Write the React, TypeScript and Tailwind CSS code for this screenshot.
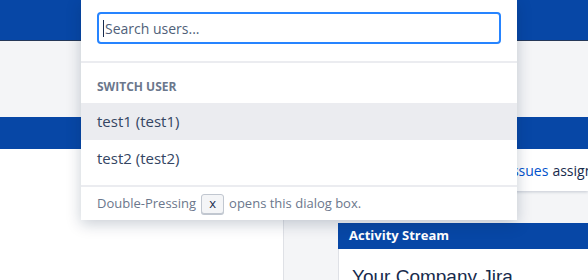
import { useState } from "react";

interface User {
  id: string;
  label: string;
}

const users: User[] = [
  { id: "test1", label: "test1 (test1)" },
  { id: "test2", label: "test2 (test2)" },
];

export default function App() {
  const [query, setQuery] = useState("");
  const [active, setActive] = useState("test1");

  const filtered = users.filter((u) =>
    u.label.toLowerCase().includes(query.toLowerCase())
  );

  return (
    <div
      className="relative h-[280px] w-[588px] overflow-hidden bg-white"
      style={{ fontFamily: '"Open Sans", "Noto Sans", sans-serif' }}
    >
      {/* page behind the dialog */}
      <div className="h-[41px] border-b border-[#253858] bg-[#0747a6]" />
      <div className="h-[76px] bg-[#f4f5f7]" />
      <div className="h-[32px] bg-[#0747a6]" />
      <div className="flex h-[131px]">
        <div className="w-[284px] shrink-0 border-r border-[#dfe1e6] bg-white" />
        <div className="min-w-0 flex-1 overflow-hidden bg-[#f4f5f7] pl-[54px]">
          <div className="flex h-[42px] items-center whitespace-nowrap bg-white pl-[12px] text-[14px] text-[#172b4d] shadow-[0_1px_3px_rgba(9,30,66,0.2)]">
            <span className="w-[158px] shrink-0" />
            <span className="text-[#0052cc]">Issues</span>
            <span className="ml-[4px]">assigned to me</span>
          </div>
          <div className="mt-[32px] flex h-[26px] items-center bg-[#0747a6] px-[11px] text-[13px] font-bold text-white">
            Activity Stream
          </div>
          <div className="h-[40px] border-l border-[#dfe1e6] bg-white pl-[13px] pt-[17px]">
            <div
              className="whitespace-nowrap text-[19px] leading-[1.15] text-[#172b4d]"
              style={{ fontFamily: '"Liberation Sans", Arial, sans-serif' }}
            >
              Your Company Jira
            </div>
          </div>
        </div>
      </div>

      {/* switch user dialog */}
      <div className="absolute left-[81px] top-0 w-[436px] bg-white shadow-[0_4px_14px_rgba(9,30,66,0.22)]">
        <div className="border-b-2 border-[#ebecf0] px-[16px] pb-[17px] pt-[12px]">
          <div className="relative">
            <input
              autoFocus
              value={query}
              onChange={(e) => setQuery(e.target.value)}
              placeholder="Search users..."
              className="block h-[32px] w-full rounded-[4px] border-2 border-[#2684ff] px-[6px] text-[14px] text-[#172b4d] caret-[#172b4d] outline-none placeholder:text-[#505f79]"
            />
            {query === "" && (
              <span className="pointer-events-none absolute left-[6px] top-[8px] h-[17px] w-px bg-[#172b4d]" />
            )}
          </div>
        </div>
        <div className="pb-[9px]">
          <div className="px-[16px] pb-[8px] pt-[16px] text-[12px] font-bold leading-[16px] text-[#6b778c]">
            SWITCH USER
          </div>
          {filtered.map((u, i) => (
            <div
              key={u.id}
              onMouseEnter={() => setActive(u.id)}
              className={`flex items-center px-[16px] text-[15px] text-[#344563] ${
                i === 0 ? "h-[37px]" : "h-[36px]"
              } ${active === u.id ? "bg-[#ebecf0]" : "bg-white"}`}
            >
              {u.label}
            </div>
          ))}
        </div>
        <div className="flex h-[35px] items-center border-t-2 border-[#ebecf0] px-[16px] text-[13px] text-[#6b778c]">
          <span>Double-Pressing</span>
          <span className="mx-[5px] flex h-[20px] w-[23px] items-center justify-center rounded-[3px] border border-[#c1c7d0] bg-[#f4f5f7] text-[13px] text-[#172b4d] shadow-[0_1px_0_#c1c7d0]">
            x
          </span>
          <span>opens this dialog box.</span>
        </div>
      </div>
    </div>
  );
}
